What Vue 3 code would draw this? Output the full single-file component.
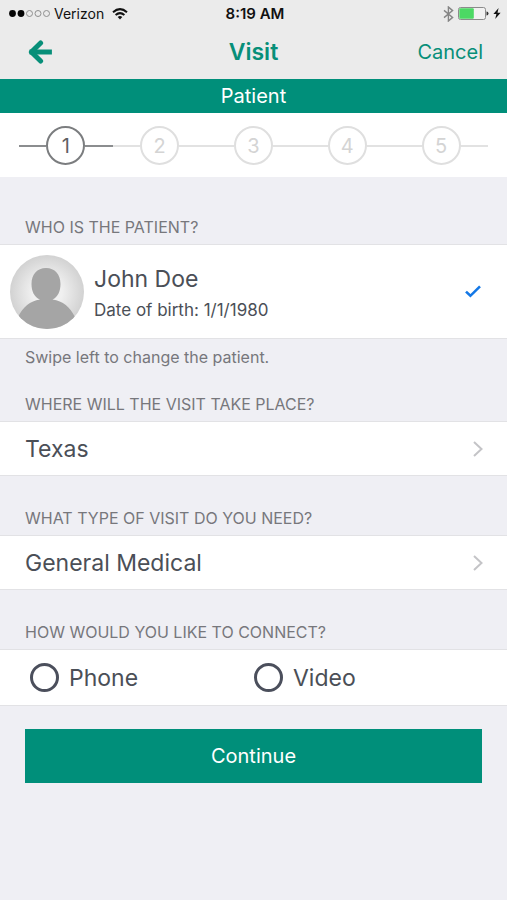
<script setup>
import { ref } from 'vue'

const steps = [1, 2, 3, 4, 5]
const current = 1
const method = ref('')
const methods = ['Phone', 'Video']
</script>

<template>
  <div class="screen">
    <div class="status">
      <div class="carrier">
        <svg width="41" height="9" viewBox="0 0 41 9" aria-hidden="true">
          <circle cx="3.5" cy="4.5" r="3.4" fill="#050505" />
          <circle cx="12" cy="4.5" r="3.4" fill="#050505" />
          <g fill="none" stroke="#8f8f8f">
            <circle cx="20.5" cy="4.5" r="3" />
            <circle cx="29" cy="4.5" r="3" />
            <circle cx="37.5" cy="4.5" r="3" />
          </g>
        </svg>
        <span>Verizon</span>
        <svg class="wifi" width="16" height="12" viewBox="0 0 16 12" aria-hidden="true">
          <g fill="none" stroke="#111" stroke-width="2">
            <path d="M1 4.2Q8-2 15 4.2" />
            <path d="M3.6 7Q8 3.2 12.4 7" />
          </g>
          <path d="M5.7 8.9Q8 7.1 10.3 8.9L8 11.4Z" fill="#111" />
        </svg>
      </div>
      <span class="time">8:19 AM</span>
      <div class="power">
        <svg width="11" height="16" viewBox="0 0 11 16" fill="none" stroke="#858585" stroke-width="1.4" aria-hidden="true">
          <path d="M1 4.4L9.6 11.4L5.4 15V1L9.6 4.6L1 11.6" />
        </svg>
        <svg width="31" height="13" viewBox="0 0 31 13" aria-hidden="true">
          <rect x="0.5" y="0.5" width="27" height="12" rx="2" fill="#f1f1f1" stroke="#8b8b8b" />
          <rect x="1.3" y="1.3" width="14.5" height="10.4" rx="1" fill="#4cd964" />
          <path d="M28.5 4.5Q30.5 4.5 30.5 6.5T28.5 8.5Z" fill="#333" />
        </svg>
        <svg width="8" height="11" viewBox="0 0 8 11" aria-hidden="true">
          <path d="M5.6 0L0.4 6H3.4L2.2 11L7.6 4.7H4.5Z" fill="#111" />
        </svg>
      </div>
    </div>

    <header class="nav">
      <button class="back" type="button" aria-label="Back">
        <svg width="24" height="24" viewBox="0 0 24 24" fill="none" stroke="#078f79" stroke-width="5" stroke-linecap="round" stroke-linejoin="round">
          <path d="M12.6 3L3.4 12L12.6 21" />
          <path d="M4 12H21.4" stroke-linecap="square" />
        </svg>
      </button>
      <h1>Visit</h1>
      <button class="cancel" type="button">Cancel</button>
    </header>

    <h2 class="banner">Patient</h2>

    <ol class="steps">
      <li v-for="n in steps" :key="n" :class="{ active: n === current }"><span>{{ n }}</span></li>
    </ol>

    <main>
      <h3 class="first">Who is the patient?</h3>
      <button class="row patient" type="button">
        <svg class="avatar" width="74" height="74" viewBox="0 0 74 74" aria-hidden="true">
          <defs>
            <radialGradient id="halo">
              <stop offset="0.4" stop-color="#f0f0f0" />
              <stop offset="1" stop-color="#d2d2d2" />
            </radialGradient>
            <clipPath id="disc"><circle cx="37" cy="37" r="37" /></clipPath>
          </defs>
          <g clip-path="url(#disc)">
            <rect width="74" height="74" fill="url(#halo)" />
            <path fill="#a5a5a5" d="M36 13C45 13 50.500 19.500 50.500 29C50.500 36 48 42 42.500 44.500C53 46 60 52 65 62V74H8V62C13 52 20 46 30 44.500C24 42 21.500 36 21.500 29C21.500 19.500 27 13 36 13Z" />
          </g>
        </svg>
        <span class="who">
          <span class="name">John Doe</span>
          <span class="dob">Date of birth: 1/1/1980</span>
        </span>
        <svg class="check" width="16" height="13" viewBox="0 0 16 13" fill="none" stroke="#1478e6" stroke-width="2.6" aria-hidden="true">
          <path d="M1 6.600L5.400 10.800L15 1.300" />
        </svg>
      </button>
      <p>Swipe left to change the patient.</p>

      <h3 class="close">Where will the visit take place?</h3>
      <button class="row" type="button">
        <span>Texas</span>
        <svg width="10" height="16" viewBox="0 0 10 16" fill="none" stroke="#c4c4c7" stroke-width="2" aria-hidden="true"><path d="M1 1L8.500 8L1 15" /></svg>
      </button>

      <h3>What type of visit do you need?</h3>
      <button class="row" type="button">
        <span>General Medical</span>
        <svg width="10" height="16" viewBox="0 0 10 16" fill="none" stroke="#c4c4c7" stroke-width="2" aria-hidden="true"><path d="M1 1L8.500 8L1 15" /></svg>
      </button>

      <h3 id="connect">How would you like to connect?</h3>
      <div class="row options" role="radiogroup" aria-labelledby="connect">
        <label v-for="m in methods" :key="m">
          <input v-model="method" type="radio" name="method" :value="m" />
          <span>{{ m }}</span>
        </label>
      </div>

      <button class="continue" type="button">Continue</button>
    </main>
  </div>
</template>

<style>
body {
  margin: 0;
  background: #efeff4;
}
</style>

<style scoped>
.screen {
  min-height: 100vh;
  background: #efeff4;
  color: #4b4f57;
  font-family: Inter, "Liberation Sans", sans-serif;
}
h1, h2, h3, p, ol {
  margin: 0;
  padding: 0;
  font-weight: 400;
}
button {
  margin: 0;
  border: 0;
  padding: 0;
  background: none;
  color: inherit;
  font: inherit;
  text-align: left;
  cursor: pointer;
}
svg {
  display: block;
  flex: none;
}
.status, .nav {
  display: grid;
  grid-template-columns: 1fr auto 1fr;
  align-items: center;
  background: #ebebeb;
}
.status {
  height: 27px;
  padding: 0 6px 0 9px;
  color: #111;
  font-size: 14px;
}
.carrier, .power {
  display: flex;
  align-items: center;
  gap: 4px;
}
.wifi {
  margin-left: 4px;
}
.time {
  font-size: 15px;
  font-weight: 600;
}
.power {
  justify-content: flex-end;
  gap: 4px;
}
.nav {
  box-sizing: border-box;
  height: 52px;
  padding: 0 24px 2px;
  color: #078f79;
}
.back {
  justify-self: start;
  padding-left: 4px;
}
.nav h1 {
  font-size: 23px;
  font-weight: 600;
}
.cancel {
  justify-self: end;
  font-size: 20px;
}
.banner {
  background: #008f7a;
  color: #fff;
  font-size: 20px;
  line-height: 34px;
  text-align: center;
}
.steps {
  display: flex;
  padding: 13px 19px 12px;
  background: #fff;
  list-style: none;
}
.steps li {
  display: flex;
  flex: 1;
  align-items: center;
  color: #d4d4d4;
}
.steps li::before, .steps li::after {
  content: "";
  flex: 1;
  height: 2px;
  background: #e2e2e2;
}
.steps span {
  box-sizing: border-box;
  width: 39px;
  height: 39px;
  border: 2px solid #dfdfdf;
  border-radius: 50%;
  font-size: 20px;
  line-height: 36px;
  text-align: center;
}
.steps .active {
  color: #5f6163;
}
.steps .active::before, .steps .active::after {
  background: #8b8d8f;
}
.steps .active span {
  border-color: #7b7d7f;
}
h3, p {
  padding: 0 25px;
  color: #77777c;
  font-size: 16px;
  line-height: 20px;
}
h3 {
  padding-top: 32px;
  padding-bottom: 7px;
  text-transform: uppercase;
}
h3.first {
  padding-top: 40px;
}
h3.close {
  padding-top: 27px;
}
p {
  padding-top: 8px;
}
.row {
  display: flex;
  box-sizing: border-box;
  width: 100%;
  min-height: 55px;
  align-items: center;
  justify-content: space-between;
  border: solid #e2e2e5;
  border-width: 1px 0;
  padding: 0 24px 0 25px;
  background: #fff;
  font-size: 23px;
}
.patient {
  min-height: 95px;
  padding-right: 26px;
  padding-left: 10px;
}
.who {
  display: flex;
  flex: 1;
  flex-direction: column;
  gap: 6px;
  margin-left: 10px;
}
.name {
  line-height: 30px;
}
.dob {
  font-size: 17px;
  line-height: 20px;
}
.options {
  min-height: 57px;
  padding-right: 34px;
}
.options label {
  display: flex;
  flex: 1;
  align-items: center;
  gap: 10px;
  padding-left: 5px;
}
.options input {
  appearance: none;
  box-sizing: border-box;
  width: 29px;
  height: 29px;
  margin: 0;
  border: 3px solid #4b4f5c;
  border-radius: 50%;
}
.options input:checked {
  background: radial-gradient(#4b4f5c 50%, #fff 55%);
}
.continue {
  display: block;
  width: calc(100% - 50px);
  margin: 23px 25px;
  background: #008f7a;
  color: #fff;
  font-size: 20px;
  line-height: 54px;
  text-align: center;
}
</style>
